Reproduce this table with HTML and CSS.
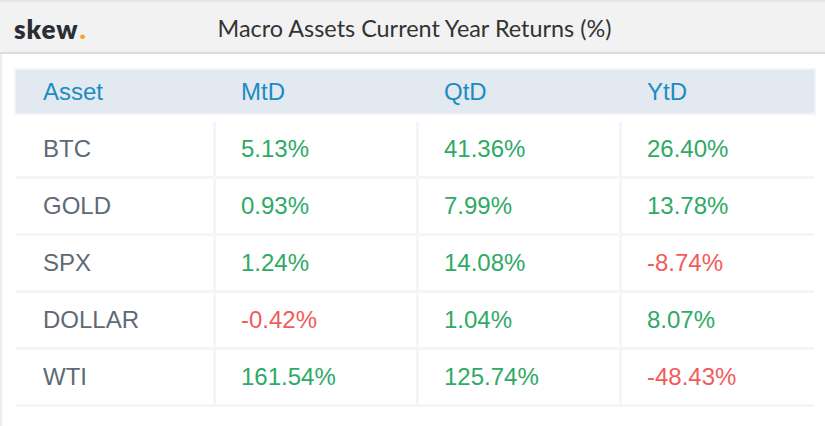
FILE: index.html
```html
<!DOCTYPE html>
<html>
<head>
<meta charset="utf-8">
<link rel="stylesheet" href="styles.css">
</head>
<body>
<header class="topbar">
  <div class="logo">skew<span class="dot">.</span></div>
  <div class="title">Macro Assets Current Year Returns (%)</div>
</header>
<main class="content">
  <div class="thead">
    <div class="cell first">Asset</div>
    <div class="cell">MtD</div>
    <div class="cell">QtD</div>
    <div class="cell">YtD</div>
  </div>
  <div class="tbody">
    <div class="cell first name">BTC</div>
    <div class="cell pos">5.13%</div>
    <div class="cell pos">41.36%</div>
    <div class="cell pos">26.40%</div>

    <div class="cell first name">GOLD</div>
    <div class="cell pos">0.93%</div>
    <div class="cell pos">7.99%</div>
    <div class="cell pos">13.78%</div>

    <div class="cell first name">SPX</div>
    <div class="cell pos">1.24%</div>
    <div class="cell pos">14.08%</div>
    <div class="cell neg">-8.74%</div>

    <div class="cell first name">DOLLAR</div>
    <div class="cell neg">-0.42%</div>
    <div class="cell pos">1.04%</div>
    <div class="cell pos">8.07%</div>

    <div class="cell first name">WTI</div>
    <div class="cell pos">161.54%</div>
    <div class="cell pos">125.74%</div>
    <div class="cell neg">-48.43%</div>
  </div>
</main>
</body>
</html>
```
FILE: styles.css
```css
html, body {
  margin: 0;
  padding: 0;
  background: #ffffff;
}
body {
  width: 825px;
  height: 426px;
  overflow: hidden;
  font-family: "Liberation Sans", Arial, sans-serif;
}
.topbar {
  position: relative;
  height: 50px;
  background: #f2f2f2;
  border-top: 2px solid #e4e4e4;
  border-bottom: 2px solid #dcdcdc;
  display: flex;
  align-items: center;
  justify-content: center;
}
.logo {
  position: absolute;
  left: 14px;
  top: 12px;
  font-family: Lato, "Open Sans", sans-serif;
  font-weight: 800;
  font-size: 26px;
  line-height: 1.2;
  color: #2b2f33;
  letter-spacing: 1px;
}
.logo .dot {
  color: #f5a623;
  margin-left: 1px;
}
.title {
  font-family: Lato, "Open Sans", sans-serif;
  font-size: 23.4px;
  color: #333333;
  margin-left: 4px;
  margin-top: 2px;
}
.content {
  border-left: 2px solid #ececec;
  height: 372px;
  padding: 16px 11px 0 14px;
  box-sizing: border-box;
}
.thead, .tbody {
  display: grid;
  grid-template-columns: 197px 200px 200px 192px;
  column-gap: 3px;
}
.thead {
  height: 43px;
  background: #e3e9f0;
  box-shadow: 0 0 0 2px #f1f4f8;
  margin-bottom: 9px;
  color: #1b8dc2;
  font-size: 24px;
}
.thead .cell {
  display: flex;
  align-items: center;
}
.tbody {
  row-gap: 3px;
  background: #f3f5f8;
  border-bottom: 3px solid #f3f5f8;
  font-size: 24px;
}
.tbody .cell {
  background: #ffffff;
  height: 54px;
  display: flex;
  align-items: center;
}
.cell {
  padding-left: 25px;
}
.cell.first {
  padding-left: 27px;
}
.name {
  color: #5e6a75;
}
.pos {
  color: #2eaa66;
}
.neg {
  color: #f25b5b;
}
```
